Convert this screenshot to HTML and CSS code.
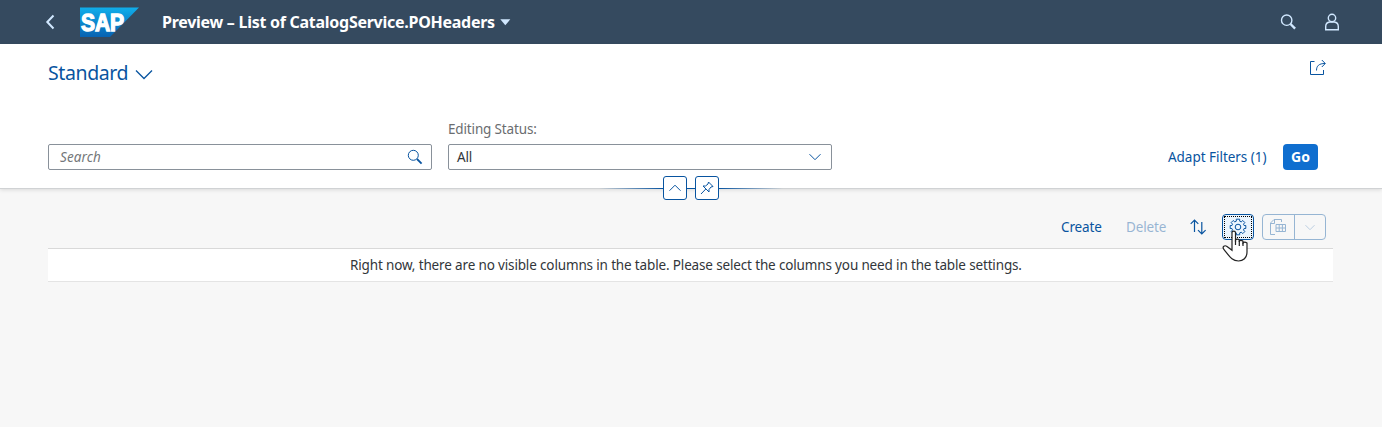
FILE: index.html
```html
<!DOCTYPE html>
<html lang="en">
<head>
<meta charset="utf-8">
<title>Preview – List of CatalogService.POHeaders</title>
<link rel="stylesheet" href="styles.css">
</head>
<body>
<header class="shell">
  <svg class="back" width="12" height="16" viewBox="0 0 12 16"><path d="M9.5 1.5 3.3 8 9.5 14.5"/></svg>
  <svg class="logo" width="59" height="30" viewBox="0 0 59 30">
    <defs><linearGradient id="sap" x1="0" y1="0" x2="0" y2="1"><stop offset="0" stop-color="#10aeeb"/><stop offset="1" stop-color="#0862b1"/></linearGradient></defs>
    <path d="M0 0.5H59L30 30H0Z" fill="url(#sap)"/>
    <text x="1" y="24" textLength="43" lengthAdjust="spacingAndGlyphs" class="logo-text">SAP</text>
  </svg>
  <h1 class="title"><span class="title-text">Preview – List of CatalogService.POHeaders</span><svg width="11" height="7" viewBox="0 0 11 7"><path d="M0.3 0.3H10.3L5.3 6.3Z" fill="#d1e8ff"/></svg></h1>
  <div class="shell-end">
    <svg width="18" height="18" viewBox="0 0 18 18"><circle cx="7.7" cy="7.2" r="5.2"/><path d="m11.5 11 4.6 4.6" stroke-width="2.4"/></svg>
    <svg width="18" height="18" viewBox="0 0 18 18"><circle cx="9" cy="5" r="3.7"/><path d="M2.7 16.7v-3.2q0-4 4-4.5h4.6q4 .5 4 4.5v3.2Z"/></svg>
  </div>
</header>
<section class="filters">
  <div class="variant-row">
    <div class="variant"><span class="variant-text">Standard</span><svg width="18" height="11" viewBox="0 0 18 11"><path d="m1 1.5 8 8 8-8"/></svg></div>
    <svg class="share" width="18" height="18" viewBox="0 0 18 18"><path d="M5.5 3.5H1.5V16.5H14.5V12M7.5 12.5C7.5 7.8 10 5.5 16 5.5M12.8 2 16.3 5.5 12.8 9"/></svg>
  </div>
  <div class="filter-row">
    <div class="field search"><span class="placeholder">Search</span><svg width="16" height="16" viewBox="0 0 16 16"><circle cx="6.3" cy="6.3" r="5"/><path d="m10 10 4.6 4.6" stroke-width="1.8"/></svg></div>
    <div class="status"><label class="label">Editing Status:</label>
      <div class="field"><span class="value">All</span><svg width="14" height="8" viewBox="0 0 14 8"><path d="m1.5 1.2 5.5 5.5 5.5-5.5"/></svg></div>
    </div>
    <div class="actions"><span class="adapt">Adapt Filters (1)</span><button class="go"><span class="go-text">Go</span></button></div>
  </div>
  <div class="divider">
    <i class="fade left"></i>
    <button class="mini"><svg width="14" height="8" viewBox="0 0 14 8"><path d="m1.5 6.7 5.5-5.5 5.5 5.5"/></svg></button>
    <i class="link"></i>
    <button class="mini"><svg width="14" height="14" viewBox="0 0 14 14"><path d="M8.5 1 13 5.5 11 6 9 8.5V11L3 5H5.5L8 3ZM5.8 8 1 13"/></svg></button>
    <i class="fade right"></i>
  </div>
</section>
<main class="content">
  <div class="toolbar">
    <span class="create">Create</span>
    <span class="delete">Delete</span>
    <svg class="sort" width="18" height="18" viewBox="0 0 18 18"><path d="M5.5 14V2M1.7 5.8 5.5 2 9.3 5.8M12.8 4V16M9 12.2 12.8 16 16.6 12.2"/></svg>
    <button class="settings"><span class="focus"><svg width="18" height="18" viewBox="0 0 18 18"><path d="M7.3 1.2h3.4v2l1.5.7 1.6-1.4 2 2-1.3 1.7.6 1.3h1.7v3h-1.7l-.6 1.4 1.3 1.7-2 2-1.6-1.4-1.5.7v1.9H7.3v-1.9l-1.5-.7-1.6 1.4-2-2 1.3-1.7-.6-1.4H1.2v-3h1.7l.6-1.3-1.3-1.7 2-2 1.6 1.4 1.5-.7Z"/><circle cx="9" cy="9" r="2.8"/></svg></span>
      <svg class="cursor" width="26" height="32" viewBox="0 0 26 32"><path d="M10 17V2.7C10 .7 13.5.7 13.5 2.7V12V9.7q2-1.4 3.8.4v2-1.2q2-1.2 3.7.4v1.8q1.5-1.8 4 0V22C25 28 21 31 16.5 31 10 31 8 27 1.7 19.2 0 16.5 2.7 14.8 5 16.5L10 20.3Z"/><path d="M13.5 9.5V15M17.3 11V16M21 12.5V16"/></svg>
    </button>
    <div class="export">
      <span class="export-main"><svg width="18" height="18" viewBox="0 0 18 18"><path d="M6 16.5H1.5V5L5 1.5H12.5V4M1.5 5.5H5.5V1.5M7 6.5H16.5V13.5H7ZM7 10H16.5M10.2 6.5V13.5M13.4 6.5V13.5"/></svg></span>
      <span class="export-menu"><svg width="12" height="7" viewBox="0 0 12 7"><path d="m1.5 1.2 4.5 4.5 4.5-4.5"/></svg></span>
    </div>
  </div>
  <div class="table"><span class="message">Right now, there are no visible columns in the table. Please select the columns you need in the table settings.</span></div>
</main>
</body>
</html>
```
FILE: styles.css
```css
* { box-sizing: border-box; }
body { margin: 0; height: 427px; overflow: hidden; background: #f7f7f7; color: #32363a; font: 13.5px/20px "Noto Sans", sans-serif; letter-spacing: -.15px; white-space: nowrap; }
svg { display: block; flex: none; fill: none; stroke: #0854a0; stroke-width: 1; }
button { margin: 0; font: inherit; letter-spacing: inherit; }
.shell { height: 44px; background: #354a5f; display: flex; align-items: center; padding: 0 41px 0 44px; }
.shell svg { stroke: #d1e8ff; stroke-width: 1.4; }
.shell .back { stroke-width: 2; }
.shell .logo { margin-left: 24px; stroke: none; }
.shell .logo-text { font: bold 23px "Liberation Sans", sans-serif; fill: #fff; stroke: #fff; stroke-width: 1.3px; }
.title { margin: 0 0 0 23px; display: flex; align-items: center; font-size: 16px; font-weight: 700; color: #fff; }
.title-text { width: 338px; letter-spacing: -.27px; }
.title svg { stroke: none; }
.shell-end { margin-left: auto; display: flex; gap: 26px; }
.filters { height: 144px; background: #fff; box-shadow: 0 1px 0 #d0d2d4, 0 2px 4px #0000001f; padding: 14px 48px 0; }
.variant-row { display: flex; justify-content: space-between; height: 62px; }
.variant { display: flex; gap: 7px; height: 30px; align-items: center; color: #0854a0; font-size: 19.5px; }
.variant-text { width: 80px; letter-spacing: -.4px; }
.variant svg { margin-top: 2px; stroke-width: 1.3; }
.share { margin: 0 7px 0 0; }
.filter-row { display: flex; align-items: flex-end; gap: 16px; height: 50px; }
.field { width: 384px; height: 26px; border: 1px solid #89919a; border-radius: 2px; background: #fff; display: flex; align-items: center; justify-content: space-between; padding: 0 9px 0 8px; }
.field.search { padding: 0 8px 0 11px; }
.placeholder { color: #74777a; font-style: italic; letter-spacing: .1px; }
.label { display: block; color: #6a6d70; margin-bottom: 5px; }
.actions { margin-left: auto; display: flex; align-items: center; gap: 16px; padding-right: 16px; }
.adapt { color: #0854a0; width: 99px; letter-spacing: -.03px; }
.go { width: 35px; height: 26px; padding: 0; border: 0; border-radius: 4px; background: #0f6ecf; color: #fff; font-size: 14px; font-weight: 700; letter-spacing: 0; }
.divider { display: flex; align-items: center; justify-content: center; height: 24px; margin-top: 6px; position: relative; }
.mini { width: 24px; height: 24px; padding: 0; border: 1px solid #0854a0; border-radius: 3px; background: #fff; display: flex; align-items: center; justify-content: center; }
.link { width: 8px; height: 1px; background: #0854a0; }
.fade { width: 64px; height: 1px; }
.left { background: linear-gradient(to right, transparent, #0854a0); }
.right { background: linear-gradient(to left, transparent, #0854a0); }
.content { padding: 26px 49px 0 48px; }
.toolbar { display: flex; align-items: center; height: 26px; justify-content: flex-end; padding-right: 7px; }
.create { color: #0854a0; width: 41px; margin-right: 24px; }
.delete { color: #0854a0; opacity: .4; width: 41px; margin-right: 22px; }
.sort { margin-right: 15px; stroke-width: 1.2; }
.settings { width: 32px; height: 26px; border: 1px solid #0854a0; border-radius: 4px; background: #ebf5fe; padding: 1px; position: relative; margin-right: 8px; }
.focus { display: flex; align-items: center; justify-content: center; height: 22px; border: 1px dotted #000; }
.settings .cursor { position: absolute; left: -1px; top: 15px; fill: #fff; stroke: #222; stroke-width: 1.2; z-index: 2; }
.export { display: flex; width: 64px; height: 26px; border: 1px solid #0854a0; border-radius: 4px; opacity: .4; }
.export-main, .export-menu { flex: 1; display: flex; align-items: center; justify-content: center; }
.export-main { border-right: 1px solid #0854a0; }
.export-menu svg { opacity: .6; }
.table { margin-top: 8px; height: 34px; background: #fff; border-top: 1px solid #d9d9d9; border-bottom: 1px solid #e4e4e4; display: flex; align-items: center; padding-left: 302px; }
```
